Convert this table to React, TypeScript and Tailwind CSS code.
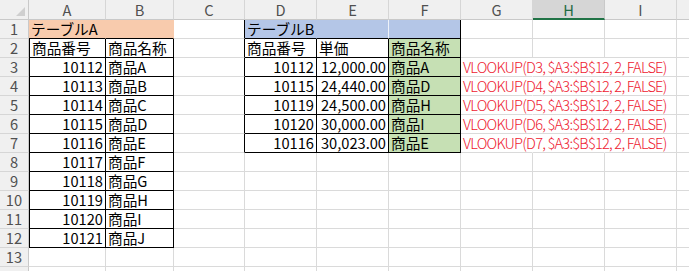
import React from "react";

type Fill = "orange" | "blue" | "green";
type Edge = "black" | "grid" | "white" | "none" | Fill;

interface CellData {
  text?: string;
  align?: "left" | "right";
  fill?: Fill;
  red?: boolean;
}

const COLS = ["A", "B", "C", "D", "E", "F", "G", "H", "I", "J"];
const ROW_COUNT = 14;

const FILL_BG: Record<Fill, string> = {
  orange: "bg-[#f8cbad]",
  blue: "bg-[#b4c6e7]",
  green: "bg-[#c6e0b4]",
};

const RIGHT: Record<Edge, string> = {
  black: "border-r-black",
  grid: "border-r-[#dadada]",
  white: "border-r-[#eef2f9]",
  none: "border-r-transparent",
  orange: "border-r-[#f8cbad]",
  blue: "border-r-[#b4c6e7]",
  green: "border-r-[#c6e0b4]",
};

const BOTTOM: Record<Edge, string> = {
  black: "border-b-black",
  grid: "border-b-[#dadada]",
  white: "border-b-white",
  none: "border-b-transparent",
  orange: "border-b-[#f8cbad]",
  blue: "border-b-[#b4c6e7]",
  green: "border-b-[#c6e0b4]",
};

// sheet contents keyed by address
const cells: Record<string, CellData> = {
  A1: { text: "テーブルA", fill: "orange" },
  B1: { fill: "orange" },
  D1: { text: "テーブルB", fill: "blue" },
  E1: { fill: "blue" },
  F1: { fill: "blue" },
  A2: { text: "商品番号" },
  B2: { text: "商品名称" },
  D2: { text: "商品番号" },
  E2: { text: "単価" },
  F2: { text: "商品名称", fill: "green" },
};

const productIds = [10112, 10113, 10114, 10115, 10116, 10117, 10118, 10119, 10120, 10121];
const productNames = ["A", "B", "C", "D", "E", "F", "G", "H", "I", "J"];
productIds.forEach((id, i) => {
  cells[`A${i + 3}`] = { text: String(id), align: "right" };
  cells[`B${i + 3}`] = { text: `商品${productNames[i]}` };
});

const lookups = [
  { id: "10112", price: "12,000.00", name: "商品A" },
  { id: "10115", price: "24,440.00", name: "商品D" },
  { id: "10119", price: "24,500.00", name: "商品H" },
  { id: "10120", price: "30,000.00", name: "商品I" },
  { id: "10116", price: "30,023.00", name: "商品E" },
];
lookups.forEach((l, i) => {
  const r = i + 3;
  cells[`D${r}`] = { text: l.id, align: "right" };
  cells[`E${r}`] = { text: l.price, align: "right" };
  cells[`F${r}`] = { text: l.name, fill: "green" };
  cells[`G${r}`] = { text: `VLOOKUP(D${r}, $A3:$B$12, 2, FALSE)`, red: true };
});

// ranges drawn with thin black borders on every edge: [c1, r1, c2, r2]
const boxed: [number, number, number, number][] = [
  [0, 2, 1, 12],
  [3, 2, 5, 7],
];

const inBox = (r: number, c: number) =>
  boxed.some(([c1, r1, c2, r2]) => c >= c1 && c <= c2 && r >= r1 && r <= r2);

const rightOverrides: Record<string, Edge> = {
  C1: "black",
  F1: "black",
  E1: "white",
};
for (let r = 3; r <= 7; r++) {
  rightOverrides[`G${r}`] = "none";
  rightOverrides[`H${r}`] = "none";
}

const rightEdge = (r: number, c: number): Edge => {
  const addr = `${COLS[c]}${r}`;
  if (rightOverrides[addr]) return rightOverrides[addr];
  if (inBox(r, c) || inBox(r, c + 1)) return "black";
  const f = cells[addr]?.fill;
  if (f) return f;
  return "grid";
};

const bottomEdge = (r: number, c: number): Edge => {
  if (inBox(r, c) || inBox(r + 1, c)) return "black";
  const f = cells[`${COLS[c]}${r}`]?.fill;
  if (f) return f;
  return "grid";
};

const FONT = "font-['Noto_Sans_CJK_JP','Noto_Sans',sans-serif]";

function Corner() {
  return (
    <div className="relative border-r border-b border-r-[#c9c9c9] border-b-[#c9c9c9] bg-[#f0f0f0]">
      <svg className="absolute left-0 top-0" width="28" height="19" viewBox="0 0 28 19">
        <polygon points="25,7 25,16 16,16" fill="#cfcfcf" />
      </svg>
    </div>
  );
}

function ColumnHeader({ label }: { label: string }) {
  const selected = label === "H";
  return (
    <div
      className={
        selected
          ? "flex items-center justify-center border-r border-b-2 border-r-[#c9c9c9] border-b-[#217346] bg-[#d6d6d6] text-[#1f6b43]"
          : "flex items-center justify-center border-r border-b border-r-[#d6d6d6] border-b-[#c9c9c9] bg-[#f0f0f0] text-[#505050]"
      }
    >
      <span className="text-[14.67px] leading-[17px]">{label}</span>
    </div>
  );
}

function RowHeader({ row }: { row: number }) {
  return (
    <div className="flex items-center justify-center border-r border-b border-r-[#c9c9c9] border-b-[#d6d6d6] bg-[#f0f0f0] text-[#505050]">
      <span className="text-[14.67px] leading-[18px]">{row}</span>
    </div>
  );
}

function Cell({ r, c }: { r: number; c: number }) {
  const addr = `${COLS[c]}${r}`;
  const data = cells[addr];
  const leftBlack = c === 0 && inBox(r, c);
  const classes = [
    "flex items-end border-r border-b overflow-visible whitespace-nowrap px-[2px]",
    RIGHT[rightEdge(r, c)],
    BOTTOM[bottomEdge(r, c)],
    leftBlack ? "border-l border-l-black" : "",
    data?.fill ? FILL_BG[data.fill] : "",
    data?.align === "right" ? "justify-end" : "justify-start",
    data?.red ? "text-[#ee2030]" : "text-black",
  ].join(" ");
  return (
    <div className={classes}>
      {data?.text && (
        // formula notes use a lighter, tighter setting than the cell values
        <span
          className={
            data.red
              ? "text-[14.67px] font-light leading-[18px] tracking-[-0.8px]"
              : "text-[14.67px] leading-[18px]"
          }
        >
          {data.text}
        </span>
      )}
    </div>
  );
}

export default function App() {
  const rows = Array.from({ length: ROW_COUNT }, (_, i) => i + 1);
  return (
    <div className={`h-[271px] w-[689px] overflow-hidden bg-white ${FONT}`}>
      <div className="grid grid-cols-[29px_77px_68px_71px_72px_72px_72px_72px_72px_72px_72px] grid-rows-[20px_repeat(14,19px)]">
        <Corner />
        {COLS.map((l) => (
          <ColumnHeader key={l} label={l} />
        ))}
        {rows.map((r) => (
          <React.Fragment key={r}>
            <RowHeader row={r} />
            {COLS.map((_, c) => (
              <Cell key={c} r={r} c={c} />
            ))}
          </React.Fragment>
        ))}
      </div>
    </div>
  );
}
